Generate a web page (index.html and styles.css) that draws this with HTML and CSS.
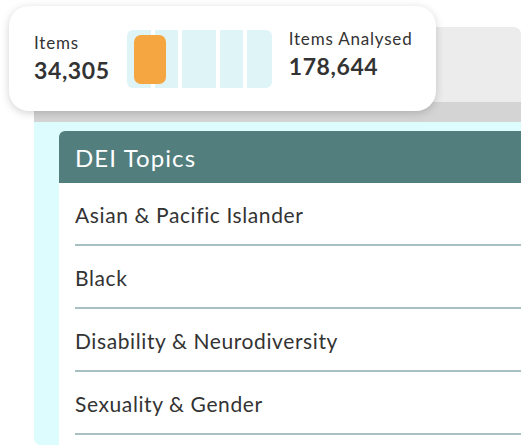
FILE: index.html
```html
<!DOCTYPE html>
<html>
<head>
<meta charset="utf-8">
<link rel="stylesheet" href="styles.css">
</head>
<body>
<div class="page">
  <div class="panel">
    <div class="panel-top"></div>
    <div class="panel-band"></div>
    <div class="panel-body">
      <div class="table">
        <div class="table-head">DEI Topics</div>
        <div class="row"><span>Asian &amp; Pacific Islander</span></div>
        <div class="row"><span>Black</span></div>
        <div class="row"><span>Disability &amp; Neurodiversity</span></div>
        <div class="row"><span>Sexuality &amp; Gender</span></div>
        <div class="table-foot"></div>
      </div>
    </div>
  </div>
  <div class="card">
    <div class="stat">
      <div class="stat-label">Items</div>
      <div class="stat-value">34,305</div>
    </div>
    <div class="bar">
      <div class="seg s1"></div>
      <div class="seg s2"></div>
      <div class="seg s3"></div>
      <div class="seg s4"></div>
      <div class="seg s5"></div>
      <div class="marker"></div>
    </div>
    <div class="stat stat2">
      <div class="stat-label">Items Analysed</div>
      <div class="stat-value">178,644</div>
    </div>
  </div>
</div>
</body>
</html>
```

FILE: styles.css
```css
* { box-sizing: border-box; }
html, body { margin: 0; padding: 0; background: #fff; }
body {
  font-family: Lato, "Noto Sans", sans-serif;
  color: #333;
  width: 522px;
  height: 448px;
  overflow: hidden;
}
.page { position: relative; padding-top: 27px; padding-left: 34px; }
.panel { width: 487px; }
.panel-top { height: 75px; background: #ececec; border-top-right-radius: 7px; }
.panel-band { height: 20px; background: #d4d4d4; }
.panel-body {
  background: #dcfcfd;
  padding: 9px 0 0 25px;
  border-bottom-left-radius: 7px;
}
.table { background: #fff; border-top-left-radius: 6px; }
.table-head {
  height: 52px;
  background: #527e7e;
  color: #fff;
  font-size: 24px;
  letter-spacing: 1.1px;
  padding-left: 16px;
  display: flex;
  align-items: center;
  border-top-left-radius: 6px;
}
.row {
  padding-left: 16px;
}
.row span {
  display: flex;
  align-items: center;
  height: 63px;
  border-bottom: 2px solid #a8c0c2;
  font-size: 21px;
  letter-spacing: 0.6px;
  color: #333;
  padding-top: 1px;
}
.table-foot { height: 10px; }

.card {
  position: absolute;
  top: 6px;
  left: 9px;
  width: 427px;
  height: 105px;
  background: #fff;
  border-radius: 20px;
  box-shadow: 0 2px 8px rgba(0,0,0,0.18);
  display: flex;
  align-items: center;
  padding-left: 25px;
}
.stat { display: flex; flex-direction: column; }
.stat-label { font-size: 17px; letter-spacing: 0.8px; color: #333; line-height: 20px; }
.stat-value { font-size: 23px; font-weight: 700; color: #333; line-height: 28px; margin-top: 3px; letter-spacing: 0.6px; }
.stat2 { margin-top: -8px; }
.bar {
  position: relative;
  display: flex;
  gap: 4px;
  height: 58px;
  margin-left: 17px;
  margin-right: 17px;
  margin-top: 0;
}
.seg { background: #dff4f7; height: 100%; }
.s1 { width: 24px; border-radius: 6px 0 0 6px; }
.s2 { width: 23px; }
.s3 { width: 34px; }
.s4 { width: 23px; }
.s5 { width: 25px; border-radius: 0 6px 6px 0; }
.marker {
  position: absolute;
  left: 7px;
  top: 5px;
  width: 32px;
  height: 49px;
  background: #f6a641;
  border-radius: 7px;
}
```
